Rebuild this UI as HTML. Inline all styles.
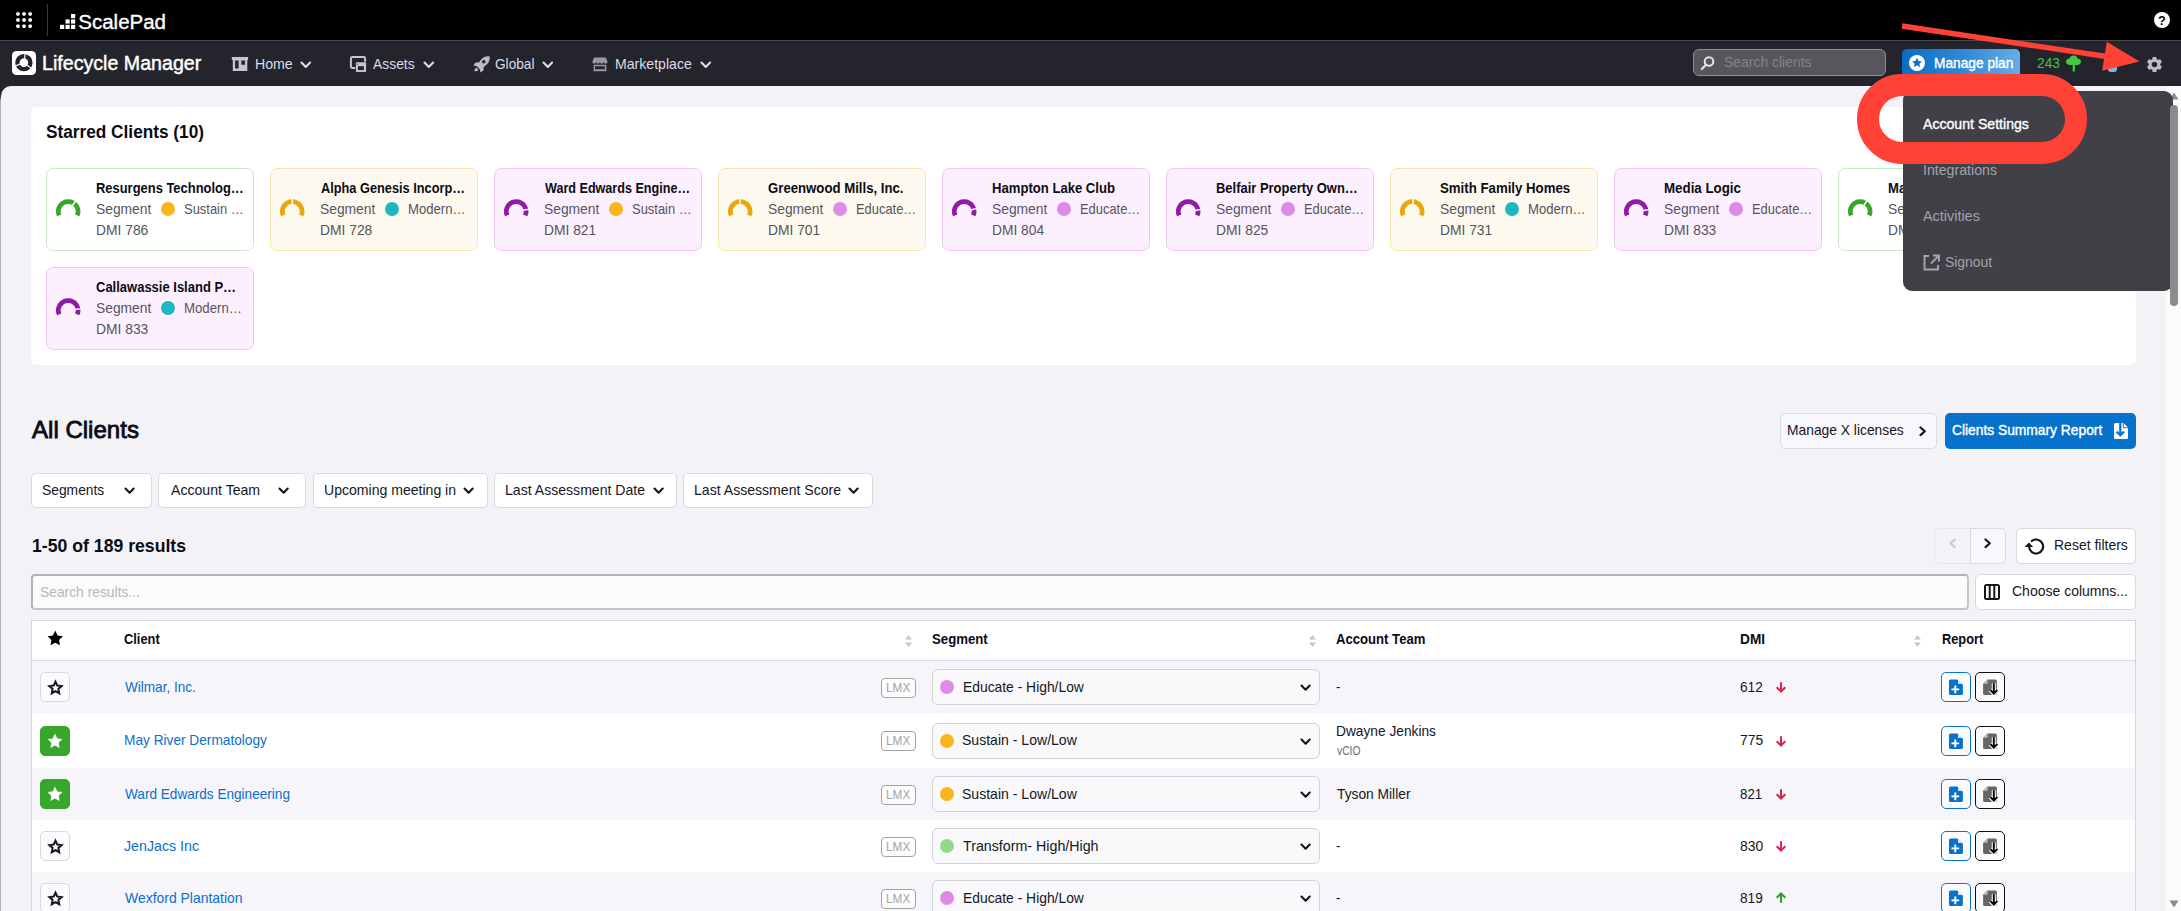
<!DOCTYPE html>
<html lang="en">
<head>
<meta charset="utf-8">
<title>Lifecycle Manager - Clients</title>
<style>
*{box-sizing:border-box;}
html,body{margin:0;padding:0;}
body{width:2181px;height:911px;overflow:hidden;position:relative;background:#24242c;font-family:"Liberation Sans",sans-serif;font-size:14.5px;color:#16161d;}
.abs{position:absolute;}
.g{position:absolute;left:0;top:0;}
.t{position:absolute;white-space:nowrap;line-height:1;transform-origin:0 0;}
.card{position:absolute;width:208px;height:83px;border:1px solid #c9e9c4;border-radius:7px;background:#fff;}
.card.y{background:#fef9ee;border-color:#fbe4b4;}
.card.p{background:#fdf0fe;border-color:#f1c6f6;}
.dot{position:absolute;width:14px;height:14px;border-radius:50%;}
.c-or{background:#f8b51c;}.c-te{background:#1fb5c2;}.c-pk{background:#dd8ae8;}.c-gr{background:#93d98c;}
.btn{position:absolute;background:#fff;border:1px solid #d7d7de;border-radius:5px;}
.row{position:absolute;left:32px;width:2103px;}
.alt{background:#f6f5fa;}
.starb{position:absolute;left:40px;width:30px;height:30px;border:1px solid #d9d9df;border-radius:5px;background:#fbfbfd;}
.starb.on{background:#38a52b;border-color:#38a52b;}
.lmx{position:absolute;left:881px;width:35px;height:20px;border:1px solid #a3a3a3;border-radius:4px;background:#fdfdfd;}
.sel{position:absolute;left:932px;width:388px;height:36px;border:1px solid #d2d2d9;border-radius:6px;background:#f9f9fb;}
.rb{position:absolute;width:30px;height:30px;border-radius:5px;background:#fbfbfd;}
.rb.b{left:1941px;border:1px solid #0672cb;}
.rb.k{left:1975px;border:1px solid #111;}
</style>
</head>
<body>
<header class="g" id="topbar">
<div class="abs" style="left:0px;top:0px;width:2181px;height:40px;background:#000"></div>
<div class="abs" style="left:0px;top:40px;width:2181px;height:1px;background:#47474d"></div>
<svg class="abs" style="left:16px;top:12px" width="16" height="16" viewBox="0 0 16 16" fill="#fff"><rect x="0.2" y="0.2" width="3.500" height="3.500" rx="1.100"/><rect x="6.3" y="0.2" width="3.500" height="3.500" rx="1.100"/><rect x="12.4" y="0.2" width="3.500" height="3.500" rx="1.100"/><rect x="0.2" y="6.3" width="3.500" height="3.500" rx="1.100"/><rect x="6.3" y="6.3" width="3.500" height="3.500" rx="1.100"/><rect x="12.4" y="6.3" width="3.500" height="3.500" rx="1.100"/><rect x="0.2" y="12.4" width="3.500" height="3.500" rx="1.100"/><rect x="6.3" y="12.4" width="3.500" height="3.500" rx="1.100"/><rect x="12.4" y="12.4" width="3.500" height="3.500" rx="1.100"/></svg>
<div class="abs" style="left:47px;top:4px;width:1px;height:32px;background:#38383e"></div>
<svg class="abs" style="left:60px;top:14px" width="16" height="16" viewBox="0 0 16 16" fill="#fff">
<rect x="0" y="10.8" width="4.2" height="4.2"/><rect x="5.5" y="5.4" width="4.2" height="4.2"/><rect x="5.5" y="10.8" width="4.2" height="4.2"/>
<rect x="11" y="0" width="4.2" height="4.2"/><rect x="11" y="5.4" width="4.2" height="4.2"/><rect x="11" y="10.8" width="4.2" height="4.2"/></svg>
<div class="t" style="left:78.27px;top:12.00px;font-size:20.5px;color:#fff;-webkit-text-stroke:0.35px #fff;">ScalePad</div>
<div class="abs" style="left:2154px;top:12px;width:16px;height:16px;border-radius:50%;background:#fff"></div>
<div class="t" style="left:2158.38px;top:14.00px;font-size:13px;color:#000;font-weight:bold;transform:scaleX(0.9772);">?</div>
</header>
<nav class="g" id="nav">
<div class="abs" style="left:0px;top:41px;width:2181px;height:45px;background:#24242c"></div>
<svg class="abs" style="left:12px;top:51px" width="24" height="24" viewBox="0 0 24 24"><rect x="0" y="0" width="24" height="24" rx="4.600" fill="#fff"/><circle cx="11.900" cy="11.600" r="6.500" fill="none" stroke="#24242c" stroke-width="4.400"/><path d="M13.300 1.500 L12.600 7.800" stroke="#fff" stroke-width="1.200" transform="rotate(0 11.9 11.6)"/><path d="M13.300 1.500 L12.600 7.800" stroke="#fff" stroke-width="1.200" transform="rotate(120 11.9 11.6)"/><path d="M13.300 1.500 L12.600 7.800" stroke="#fff" stroke-width="1.200" transform="rotate(240 11.9 11.6)"/></svg>
<div class="t" style="left:41.91px;top:53.00px;font-size:20px;color:#fff;-webkit-text-stroke:0.45px #fff;transform:scaleX(0.9812);">Lifecycle Manager</div>
<svg class="abs" style="left:231px;top:56px" width="18" height="16" viewBox="0 0 18 16"><path fill="#c6c5d5" fill-rule="evenodd" d="M0.800 1h16.300v2.900h-0.800V15H1.800V3.900H0.800z M4.100 4.600v8h3.500v-8z M10.300 4.600v4.100H14V4.600z"/></svg>
<div class="t" style="left:254.82px;top:57.00px;font-size:14.5px;color:#dcdce7;transform:scaleX(0.9749);">Home</div>
<svg class="abs" style="left:300.2px;top:60.89999999999999px" width="11.6" height="8.4" viewBox="-1.5 -1.5 11.6 8.4"><path d="M0 0 L4.3 4.4 L8.6 0" fill="none" stroke="#dcdce7" stroke-width="2.1" stroke-linecap="round" stroke-linejoin="round"/></svg>
<svg class="abs" style="left:349px;top:55px" width="18" height="18" viewBox="0 0 18 18"><rect x="1.900" y="2" width="14.200" height="11" rx="1.400" fill="none" stroke="#c6c5d5" stroke-width="2"/><rect x="6.300" y="6.700" width="11.500" height="11" fill="#24242c"/><rect x="6.900" y="7.300" width="10.200" height="9.700" rx="1" fill="#c6c5d5"/><rect x="8.900" y="11.200" width="6" height="3.900" fill="#24242c"/><circle cx="8.600" cy="9.100" r="0.700" fill="#24242c"/></svg>
<div class="t" style="left:373.08px;top:57.00px;font-size:14.5px;color:#dcdce7;transform:scaleX(0.9571);">Assets</div>
<svg class="abs" style="left:423.2px;top:61.0px" width="11.6" height="8.4" viewBox="-1.5 -1.5 11.6 8.4"><path d="M0 0 L4.3 4.4 L8.6 0" fill="none" stroke="#dcdce7" stroke-width="2.1" stroke-linecap="round" stroke-linejoin="round"/></svg>
<svg class="abs" style="left:472.500px;top:55.500px" width="17" height="17" viewBox="0 0 17 17"><path fill="#bcbbca" d="M16.600 0.400c-3.600-.5-7 1-9.300 4.200L6.200 6.200 2.600 6.600 0.400 9.600l3.400.6 3 3 .6 3.400 3-2.200.4-3.600 1.600-1.100c3.200-2.300 4.700-5.700 4.200-9.300z M10.800 7.600a1.800 1.800 0 1 1 0-3.600 1.800 1.800 0 0 1 0 3.600z M1.300 15.300l.8-2.800 1.400-.8 1.800 1.800-.8 1.400z" fill-rule="evenodd"/></svg>
<div class="t" style="left:494.82px;top:57.00px;font-size:14.5px;color:#dcdce7;transform:scaleX(0.9407);">Global</div>
<svg class="abs" style="left:542.3000000000001px;top:61.0px" width="11.6" height="8.4" viewBox="-1.5 -1.5 11.6 8.4"><path d="M0 0 L4.3 4.4 L8.6 0" fill="none" stroke="#dcdce7" stroke-width="2.1" stroke-linecap="round" stroke-linejoin="round"/></svg>
<svg class="abs" style="left:592px;top:57px" width="16" height="15" viewBox="0 0 16 15"><path fill="#9897a6" fill-rule="evenodd" d="M2.200 0.400h11.600L15.500 4.600c0 1.300-.8 2.200-1.900 2.200s-1.900-.9-1.900-2.200c0 1.300-.8 2.200-1.900 2.200S7.900 5.900 7.900 4.600c0 1.300-.8 2.200-1.900 2.200S4.100 5.900 4.100 4.600c0 1.300-.8 2.200-1.900 2.200S0.400 5.900 0.400 4.600z M1.600 7.800h12.800v6.400H1.600z M3 9.300v3h9.800v-3z"/></svg>
<div class="t" style="left:614.89px;top:57.00px;font-size:14.5px;color:#dcdce7;transform:scaleX(0.9719);">Marketplace</div>
<svg class="abs" style="left:700.2px;top:60.89999999999999px" width="11.6" height="8.4" viewBox="-1.5 -1.5 11.6 8.4"><path d="M0 0 L4.3 4.4 L8.6 0" fill="none" stroke="#dcdce7" stroke-width="2.1" stroke-linecap="round" stroke-linejoin="round"/></svg>
<div class="abs" style="left:1693px;top:49px;width:193px;height:27px;border:1px solid #8e8e93;border-radius:6px;background:#56565c"></div>
<svg class="abs" style="left:1700px;top:55px" width="16" height="16" viewBox="0 0 16 16"><circle cx="9" cy="6.500" r="4.300" fill="none" stroke="#e4e4ea" stroke-width="2"/><path d="M6 9.800 L1.800 14" stroke="#e4e4ea" stroke-width="2.200" stroke-linecap="round"/></svg>
<div class="t" style="left:1724.33px;top:55.00px;font-size:14.5px;color:#84848b;transform:scaleX(0.9606);">Search clients</div>
<div class="abs" style="left:1902px;top:49px;width:118px;height:33px;border-radius:5px;background:linear-gradient(90deg,#0a6cc4 0%,#2f88d4 50%,#66ade6 100%)"></div>
<svg class="abs" style="left:1909px;top:54.500px" width="16" height="16" viewBox="0 0 17 17"><circle cx="8.500" cy="8.500" r="8.500" fill="#fff"/><path fill="#0b6fc7" d="M8.500 3l1.600 3.400 3.700.4-2.800 2.500.8 3.600-3.300-1.900-3.300 1.900.8-3.600L3.200 6.800l3.700-.4z"/></svg>
<div class="t" style="left:1933.62px;top:56.00px;font-size:14.5px;color:#fff;-webkit-text-stroke:0.4px #fff;transform:scaleX(0.9465);">Manage plan</div>
<div class="t" style="left:2036.62px;top:56.00px;font-size:14.5px;color:#41c83c;transform:scaleX(0.9492);">243</div>
<svg class="abs" style="left:2065px;top:54.500px" width="17" height="17" viewBox="0 0 17 18"><path fill="#41c83c" d="M8.800 0.500c2.400 0 3.800 1.500 3.900 3.200 2.200.2 3.800 1.600 3.800 3.500 0 2-1.800 3.400-4.200 3.400H10v6.900H7.600v-6.900H4.700C2.300 10.600.5 9.200.5 7.200c0-1.900 1.600-3.300 3.800-3.500C4.600 2 6.400.5 8.800.5z"/></svg>
<div class="abs" style="left:2108px;top:64px;width:9px;height:8px;border-radius:3px;background:#7fb4e4"></div>
<svg class="abs" style="left:2145.300px;top:54.500px" width="19" height="19" viewBox="0 0 24 24"><path fill="#bdbccb" d="M19.140 12.940c.04-.3.060-.61.060-.94 0-.32-.02-.64-.07-.94l2.030-1.580a.49.49 0 0 0 .12-.61l-1.920-3.320a.488.488 0 0 0-.59-.22l-2.390.96c-.5-.38-1.030-.7-1.620-.94l-.36-2.540a.484.484 0 0 0-.48-.41h-3.840c-.24 0-.43.170-.47.410l-.36 2.540c-.59.240-1.130.570-1.620.940l-2.390-.960c-.22-.080-.47 0-.59.220L2.740 8.870c-.12.210-.08.470.12.610l2.030 1.580c-.05.300-.09.630-.09.940s.02.640.07.940l-2.030 1.580a.49.49 0 0 0-.12.610l1.920 3.320c.12.220.37.290.59.220l2.390-.96c.5.380 1.030.7 1.620.94l.36 2.540c.05.240.24.410.48.410h3.840c.24 0 .44-.17.470-.41l.36-2.540c.59-.24 1.130-.56 1.620-.94l2.390.96c.22.080.47 0 .59-.22l1.920-3.320c.12-.22.070-.47-.12-.61l-2.010-1.580zM12 15.600c-1.980 0-3.600-1.620-3.600-3.600s1.620-3.600 3.600-3.600 3.600 1.620 3.600 3.600-1.620 3.600-3.600 3.600z"/></svg>
</nav>
<main class="g" id="content">
<div class="abs" style="left:1px;top:86px;width:2165px;height:825px;background:#f3f2f7;border-top-left-radius:10px"></div>
<div class="abs" style="left:0px;top:96px;width:1px;height:815px;background:linear-gradient(180deg,#24242c 0,#b2b2b5 5px,#b2b2b5 100%)"></div>
<section class="g" id="starred">
<div class="abs" style="left:31px;top:107px;width:2105px;height:258px;background:#fff;border-radius:5px"></div>
<div class="t" style="left:46.15px;top:123.00px;font-size:18px;color:#0c0c14;font-weight:bold;transform:scaleX(0.9573);">Starred Clients (10)</div>
<div class="card g" style="left:46px;top:168px">
<svg class="abs" style="left:8.800px;top:30.300px" width="25" height="19" viewBox="0 0 25 19"><path d="M3.20 16.41 A9.85 9.85 0 1 1 21.20 16.41" fill="none" stroke="#38a52b" stroke-width="4.7"/><path d="M16.02 7.14 L20.14 1.48" stroke="#fff" stroke-width="1.500"/></svg>
<div class="dot c-or" style="left:114px;top:33px"></div>
</div>
<div class="t" style="left:96.16px;top:181.00px;font-size:14.5px;color:#0c0c14;font-weight:bold;transform:scaleX(0.8919);">Resurgens Technolog…</div>
<div class="t" style="left:95.52px;top:202.00px;font-size:14.5px;color:#55555f;transform:scaleX(0.9534);">Segment</div>
<div class="t" style="left:183.80px;top:202.00px;font-size:14.5px;color:#55555f;transform:scaleX(0.8928);">Sustain …</div>
<div class="t" style="left:95.95px;top:223.00px;font-size:14.5px;color:#55555f;transform:scaleX(0.9545);">DMI 786</div>
<div class="card y" style="left:270px;top:168px">
<svg class="abs" style="left:8.800px;top:30.300px" width="25" height="19" viewBox="0 0 25 19"><path d="M3.20 16.41 A9.85 9.85 0 1 1 21.20 16.41" fill="none" stroke="#e8a80c" stroke-width="4.7"/><path d="M12.31 5.90 L12.44 -1.10" stroke="#fef9ee" stroke-width="1.500"/></svg>
<div class="dot c-te" style="left:114px;top:33px"></div>
</div>
<div class="t" style="left:320.88px;top:181.00px;font-size:14.5px;color:#0c0c14;font-weight:bold;transform:scaleX(0.8802);">Alpha Genesis Incorp…</div>
<div class="t" style="left:319.52px;top:202.00px;font-size:14.5px;color:#55555f;transform:scaleX(0.9534);">Segment</div>
<div class="t" style="left:407.99px;top:202.00px;font-size:14.5px;color:#55555f;transform:scaleX(0.9054);">Modern…</div>
<div class="t" style="left:319.74px;top:223.00px;font-size:14.5px;color:#55555f;transform:scaleX(0.9544);">DMI 728</div>
<div class="card p" style="left:494px;top:168px">
<svg class="abs" style="left:8.800px;top:30.300px" width="25" height="19" viewBox="0 0 25 19"><path d="M3.20 16.41 A9.85 9.85 0 1 1 21.20 16.41" fill="none" stroke="#8e1ba8" stroke-width="4.7"/><path d="M18.60 11.27 L25.49 10.06" stroke="#fdf0fe" stroke-width="1.500"/></svg>
<div class="dot c-or" style="left:114px;top:33px"></div>
</div>
<div class="t" style="left:544.84px;top:181.00px;font-size:14.5px;color:#0c0c14;font-weight:bold;transform:scaleX(0.8680);">Ward Edwards Engine…</div>
<div class="t" style="left:543.52px;top:202.00px;font-size:14.5px;color:#55555f;transform:scaleX(0.9534);">Segment</div>
<div class="t" style="left:631.80px;top:202.00px;font-size:14.5px;color:#55555f;transform:scaleX(0.8928);">Sustain …</div>
<div class="t" style="left:543.74px;top:223.00px;font-size:14.5px;color:#55555f;transform:scaleX(0.9535);">DMI 821</div>
<div class="card y" style="left:718px;top:168px">
<svg class="abs" style="left:8.800px;top:30.300px" width="25" height="19" viewBox="0 0 25 19"><path d="M3.20 16.41 A9.85 9.85 0 1 1 21.20 16.41" fill="none" stroke="#e8a80c" stroke-width="4.7"/><path d="M11.97 5.90 L11.73 -1.09" stroke="#fef9ee" stroke-width="1.500"/></svg>
<div class="dot c-pk" style="left:114px;top:33px"></div>
</div>
<div class="t" style="left:768.20px;top:181.00px;font-size:14.5px;color:#0c0c14;font-weight:bold;transform:scaleX(0.9092);">Greenwood Mills, Inc.</div>
<div class="t" style="left:767.52px;top:202.00px;font-size:14.5px;color:#55555f;transform:scaleX(0.9534);">Segment</div>
<div class="t" style="left:855.81px;top:202.00px;font-size:14.5px;color:#55555f;transform:scaleX(0.8892);">Educate…</div>
<div class="t" style="left:767.74px;top:223.00px;font-size:14.5px;color:#55555f;transform:scaleX(0.9535);">DMI 701</div>
<div class="card p" style="left:942px;top:168px">
<svg class="abs" style="left:8.800px;top:30.300px" width="25" height="19" viewBox="0 0 25 19"><path d="M3.20 16.41 A9.85 9.85 0 1 1 21.20 16.41" fill="none" stroke="#8e1ba8" stroke-width="4.7"/><path d="M18.53 10.94 L25.35 9.36" stroke="#fdf0fe" stroke-width="1.500"/></svg>
<div class="dot c-pk" style="left:114px;top:33px"></div>
</div>
<div class="t" style="left:992.18px;top:181.00px;font-size:14.5px;color:#0c0c14;font-weight:bold;transform:scaleX(0.9031);">Hampton Lake Club</div>
<div class="t" style="left:991.52px;top:202.00px;font-size:14.5px;color:#55555f;transform:scaleX(0.9534);">Segment</div>
<div class="t" style="left:1079.81px;top:202.00px;font-size:14.5px;color:#55555f;transform:scaleX(0.8892);">Educate…</div>
<div class="t" style="left:991.53px;top:223.00px;font-size:14.5px;color:#55555f;transform:scaleX(0.9499);">DMI 804</div>
<div class="card p" style="left:1166px;top:168px">
<svg class="abs" style="left:8.800px;top:30.300px" width="25" height="19" viewBox="0 0 25 19"><path d="M3.20 16.41 A9.85 9.85 0 1 1 21.20 16.41" fill="none" stroke="#8e1ba8" stroke-width="4.7"/><path d="M18.64 11.50 L25.57 10.52" stroke="#fdf0fe" stroke-width="1.500"/></svg>
<div class="dot c-pk" style="left:114px;top:33px"></div>
</div>
<div class="t" style="left:1216.16px;top:181.00px;font-size:14.5px;color:#0c0c14;font-weight:bold;transform:scaleX(0.8934);">Belfair Property Own…</div>
<div class="t" style="left:1215.52px;top:202.00px;font-size:14.5px;color:#55555f;transform:scaleX(0.9534);">Segment</div>
<div class="t" style="left:1303.81px;top:202.00px;font-size:14.5px;color:#55555f;transform:scaleX(0.8892);">Educate…</div>
<div class="t" style="left:1215.95px;top:223.00px;font-size:14.5px;color:#55555f;transform:scaleX(0.9540);">DMI 825</div>
<div class="card y" style="left:1390px;top:168px">
<svg class="abs" style="left:8.800px;top:30.300px" width="25" height="19" viewBox="0 0 25 19"><path d="M3.20 16.41 A9.85 9.85 0 1 1 21.20 16.41" fill="none" stroke="#e8a80c" stroke-width="4.7"/><path d="M12.77 5.92 L13.38 -1.05" stroke="#fef9ee" stroke-width="1.500"/></svg>
<div class="dot c-te" style="left:114px;top:33px"></div>
</div>
<div class="t" style="left:1440.16px;top:181.00px;font-size:14.5px;color:#0c0c14;font-weight:bold;transform:scaleX(0.9127);">Smith Family Homes</div>
<div class="t" style="left:1439.52px;top:202.00px;font-size:14.5px;color:#55555f;transform:scaleX(0.9534);">Segment</div>
<div class="t" style="left:1527.99px;top:202.00px;font-size:14.5px;color:#55555f;transform:scaleX(0.9054);">Modern…</div>
<div class="t" style="left:1439.74px;top:223.00px;font-size:14.5px;color:#55555f;transform:scaleX(0.9535);">DMI 731</div>
<div class="card p" style="left:1614px;top:168px">
<svg class="abs" style="left:8.800px;top:30.300px" width="25" height="19" viewBox="0 0 25 19"><path d="M3.20 16.41 A9.85 9.85 0 1 1 21.20 16.41" fill="none" stroke="#8e1ba8" stroke-width="4.7"/><path d="M18.65 11.61 L25.60 10.75" stroke="#fdf0fe" stroke-width="1.500"/></svg>
<div class="dot c-pk" style="left:114px;top:33px"></div>
</div>
<div class="t" style="left:1664.10px;top:181.00px;font-size:14.5px;color:#0c0c14;font-weight:bold;transform:scaleX(0.9187);">Media Logic</div>
<div class="t" style="left:1663.52px;top:202.00px;font-size:14.5px;color:#55555f;transform:scaleX(0.9534);">Segment</div>
<div class="t" style="left:1751.81px;top:202.00px;font-size:14.5px;color:#55555f;transform:scaleX(0.8892);">Educate…</div>
<div class="t" style="left:1663.95px;top:223.00px;font-size:14.5px;color:#55555f;transform:scaleX(0.9540);">DMI 833</div>
<div class="card g" style="left:1838px;top:168px">
<svg class="abs" style="left:8.800px;top:30.300px" width="25" height="19" viewBox="0 0 25 19"><path d="M3.20 16.41 A9.85 9.85 0 1 1 21.20 16.41" fill="none" stroke="#38a52b" stroke-width="4.7"/><path d="M15.64 6.89 L19.35 0.95" stroke="#fff" stroke-width="1.500"/></svg>
<div class="dot c-or" style="left:114px;top:33px"></div>
</div>
<div class="t" style="left:1888.16px;top:181.00px;font-size:14.5px;color:#0c0c14;font-weight:bold;transform:scaleX(0.9031);">Marsh Harbor Dental</div>
<div class="t" style="left:1887.52px;top:202.00px;font-size:14.5px;color:#55555f;transform:scaleX(0.9534);">Segment</div>
<div class="t" style="left:1975.80px;top:202.00px;font-size:14.5px;color:#55555f;transform:scaleX(0.8928);">Sustain …</div>
<div class="t" style="left:1887.95px;top:223.00px;font-size:14.5px;color:#55555f;transform:scaleX(0.9545);">DMI 790</div>
<div class="card p" style="left:46px;top:267px">
<svg class="abs" style="left:8.800px;top:30.300px" width="25" height="19" viewBox="0 0 25 19"><path d="M3.20 16.41 A9.85 9.85 0 1 1 21.20 16.41" fill="none" stroke="#8e1ba8" stroke-width="4.7"/><path d="M18.65 11.61 L25.60 10.75" stroke="#fdf0fe" stroke-width="1.500"/></svg>
<div class="dot c-te" style="left:114px;top:33px"></div>
</div>
<div class="t" style="left:96.19px;top:280.00px;font-size:14.5px;color:#0c0c14;font-weight:bold;transform:scaleX(0.8960);">Callawassie Island P…</div>
<div class="t" style="left:95.52px;top:301.00px;font-size:14.5px;color:#55555f;transform:scaleX(0.9534);">Segment</div>
<div class="t" style="left:183.58px;top:301.00px;font-size:14.5px;color:#55555f;transform:scaleX(0.9099);">Modern…</div>
<div class="t" style="left:95.95px;top:322.00px;font-size:14.5px;color:#55555f;transform:scaleX(0.9540);">DMI 833</div>
</section>
<section class="g" id="clients">
<div class="t" style="left:31.96px;top:418.00px;font-size:24.5px;color:#0c0c14;-webkit-text-stroke:0.85px #0c0c14;transform:scaleX(0.9817);">All Clients</div>
<div class="abs" style="left:1780px;top:413px;width:157px;height:36px;background:#f8f7fb;border:1px solid #dcdce3;border-radius:5px"></div>
<div class="t" style="left:1786.89px;top:423.00px;font-size:14.5px;color:#16161d;transform:scaleX(0.9530);">Manage X licenses</div>
<svg class="abs" style="left:1918.6499999999999px;top:425.7px" width="7.3" height="10.6" viewBox="-1.5 -1.5 7.3 10.6"><path d="M0 0 L4.3 3.8 L0 7.6" fill="none" stroke="#16161d" stroke-width="2.2" stroke-linecap="round" stroke-linejoin="round"/></svg>
<div class="abs" style="left:1945px;top:413px;width:191px;height:36px;background:#0672cb;border-radius:5px"></div>
<div class="t" style="left:1951.81px;top:423.00px;font-size:14.5px;color:#fff;-webkit-text-stroke:0.4px #fff;transform:scaleX(0.9514);">Clients Summary Report</div>
<svg class="abs" style="left:2114px;top:423px" width="14" height="16" viewBox="0 0 14 16"><path fill="#fff" d="M1.500 0h8L14 4.400V14.500A1.500 1.500 0 0 1 12.500 16h-11A1.500 1.500 0 0 1 0 14.500v-13A1.500 1.500 0 0 1 1.500 0z"/><path d="M9.300 0v4.700h4.700" fill="none" stroke="#0672cb" stroke-width="0.900"/><path d="M6.300 0v12 M2.600 8.600L6.300 12.300 10 8.600" fill="none" stroke="#0672cb" stroke-width="2.200"/></svg>
<div class="btn" style="left:31px;top:473px;width:121px;height:35px;"></div>
<div class="t" style="left:42.38px;top:483.00px;font-size:14.5px;color:#16161d;transform:scaleX(0.9541);">Segments</div>
<svg class="abs" style="left:124.4px;top:486.7px" width="11.2" height="8.2" viewBox="-1.5 -1.5 11.2 8.2"><path d="M0 0 L4.1 4.2 L8.2 0" fill="none" stroke="#16161d" stroke-width="2.1" stroke-linecap="round" stroke-linejoin="round"/></svg>
<div class="btn" style="left:158px;top:473px;width:148px;height:35px;"></div>
<div class="t" style="left:170.52px;top:483.00px;font-size:14.5px;color:#16161d;transform:scaleX(0.9727);">Account Team</div>
<svg class="abs" style="left:278.2px;top:486.7px" width="11.2" height="8.2" viewBox="-1.5 -1.5 11.2 8.2"><path d="M0 0 L4.1 4.2 L8.2 0" fill="none" stroke="#16161d" stroke-width="2.1" stroke-linecap="round" stroke-linejoin="round"/></svg>
<div class="btn" style="left:313px;top:473px;width:175px;height:35px;"></div>
<div class="t" style="left:323.53px;top:483.00px;font-size:14.5px;color:#16161d;transform:scaleX(0.9696);">Upcoming meeting in</div>
<svg class="abs" style="left:463.4px;top:486.7px" width="11.2" height="8.2" viewBox="-1.5 -1.5 11.2 8.2"><path d="M0 0 L4.1 4.2 L8.2 0" fill="none" stroke="#16161d" stroke-width="2.1" stroke-linecap="round" stroke-linejoin="round"/></svg>
<div class="btn" style="left:494px;top:473px;width:183px;height:35px;"></div>
<div class="t" style="left:505.37px;top:483.00px;font-size:14.5px;color:#16161d;transform:scaleX(0.9710);">Last Assessment Date</div>
<svg class="abs" style="left:652.6px;top:486.7px" width="11.2" height="8.2" viewBox="-1.5 -1.5 11.2 8.2"><path d="M0 0 L4.1 4.2 L8.2 0" fill="none" stroke="#16161d" stroke-width="2.1" stroke-linecap="round" stroke-linejoin="round"/></svg>
<div class="btn" style="left:683px;top:473px;width:190px;height:35px;"></div>
<div class="t" style="left:694.37px;top:483.00px;font-size:14.5px;color:#16161d;transform:scaleX(0.9707);">Last Assessment Score</div>
<svg class="abs" style="left:847.9px;top:486.7px" width="11.2" height="8.2" viewBox="-1.5 -1.5 11.2 8.2"><path d="M0 0 L4.1 4.2 L8.2 0" fill="none" stroke="#16161d" stroke-width="2.1" stroke-linecap="round" stroke-linejoin="round"/></svg>
<div class="t" style="left:31.53px;top:537.00px;font-size:18.5px;color:#0c0c14;font-weight:bold;transform:scaleX(0.9543);">1-50 of 189 results</div>
<div class="abs" style="left:1934px;top:528px;width:37px;height:36px;border:1px solid #e7e6ec;border-radius:5px 0 0 5px;background:#f3f2f7"></div>
<div class="abs" style="left:1970px;top:528px;width:36px;height:36px;border:1px solid #dadae0;border-radius:0 5px 5px 0;background:#f8f7fb"></div>
<svg class="abs" style="left:1948.6499999999999px;top:538.0px" width="7.3" height="10.6" viewBox="-1.5 -1.5 7.3 10.6"><path d="M4.3 0 L0 3.8 L4.3 7.6" fill="none" stroke="#c9c9cf" stroke-width="2.2" stroke-linecap="round" stroke-linejoin="round"/></svg>
<svg class="abs" style="left:1984.35px;top:538.0px" width="7.3" height="10.6" viewBox="-1.5 -1.5 7.3 10.6"><path d="M0 0 L4.3 3.8 L0 7.6" fill="none" stroke="#16161d" stroke-width="2.2" stroke-linecap="round" stroke-linejoin="round"/></svg>
<div class="btn" style="left:2016px;top:528px;width:120px;height:36px;"></div>
<svg class="abs" style="left:2024px;top:537px" width="21" height="19" viewBox="0 0 21 19"><path d="M7.900 3.900 A7 7 0 1 1 5.100 9.800" fill="none" stroke="#16161d" stroke-width="2.200" stroke-linecap="round"/><path d="M0.600 9.900 L9.200 9.900 L4.900 5.500z" fill="#16161d"/></svg>
<div class="t" style="left:2054.38px;top:538.00px;font-size:14.5px;color:#16161d;transform:scaleX(0.9648);">Reset filters</div>
<div class="abs" style="left:31px;top:574px;width:1938px;height:36px;border:2px solid #c4c4c4;border-top-color:#b4b4b4;border-left-color:#b4b4b4;border-radius:4px;background:#fbfbfb"></div>
<div class="t" style="left:40.46px;top:585.00px;font-size:14.5px;color:#b7b7b7;transform:scaleX(0.9537);">Search results...</div>
<div class="btn" style="left:1975px;top:574px;width:161px;height:36px;"></div>
<svg class="abs" style="left:1984px;top:584px" width="16" height="16" viewBox="0 0 16 16"><rect x="1" y="1" width="14" height="14" rx="1.500" fill="none" stroke="#16161d" stroke-width="2"/><path d="M5.700 1v14 M10.300 1v14" stroke="#16161d" stroke-width="2"/></svg>
<div class="t" style="left:2012.23px;top:584.00px;font-size:14.5px;color:#16161d;transform:scaleX(0.9656);">Choose columns...</div>
<div class="abs" style="left:31px;top:620px;width:2105px;height:291px;background:#fff;border:1px solid #d5d5dc;border-bottom:none"></div>
<div class="abs" style="left:32px;top:660px;width:2103px;height:1px;background:#d9d9df"></div>
<svg class="abs" style="left:46.800px;top:630.300px" width="16.500" height="16.500" viewBox="0 0 16 16"><path d="M8 0.600l2.300 4.800 5.200.7-3.800 3.600.9 5.200L8 12.400l-4.600 2.500.9-5.200L0.500 6.100l5.200-.7z" fill="#000"/></svg>
<div class="t" style="left:124.19px;top:632.00px;font-size:14.5px;color:#0c0c14;font-weight:bold;transform:scaleX(0.8872);">Client</div>
<svg class="abs" style="left:904.5px;top:635px" width="7" height="12" viewBox="0 0 7 12"><path d="M3.500 0L7 4.500H0z M3.500 12L7 7.500H0z" fill="#c6c6cc"/></svg>
<div class="t" style="left:931.65px;top:632.00px;font-size:14.5px;color:#0c0c14;font-weight:bold;transform:scaleX(0.9098);">Segment</div>
<svg class="abs" style="left:1308.5px;top:635px" width="7" height="12" viewBox="0 0 7 12"><path d="M3.500 0L7 4.500H0z M3.500 12L7 7.500H0z" fill="#c6c6cc"/></svg>
<div class="t" style="left:1336.16px;top:632.00px;font-size:14.5px;color:#0c0c14;font-weight:bold;transform:scaleX(0.9046);">Account Team</div>
<div class="t" style="left:1740.10px;top:632.00px;font-size:14.5px;color:#0c0c14;font-weight:bold;transform:scaleX(0.9437);">DMI</div>
<svg class="abs" style="left:1913.5px;top:635px" width="7" height="12" viewBox="0 0 7 12"><path d="M3.500 0L7 4.500H0z M3.500 12L7 7.500H0z" fill="#c6c6cc"/></svg>
<div class="t" style="left:1941.65px;top:632.00px;font-size:14.5px;color:#0c0c14;font-weight:bold;transform:scaleX(0.8820);">Report</div>
<div class="g" id="row1">
<div class="abs" style="left:32px;top:661px;width:2103px;height:52px;background:#f6f5fa"></div>
<div class="starb" style="top:672.0px"><svg class="abs" style="left:5.500px;top:5.500px" width="17" height="17" viewBox="0 0 16 16"><path d="M8 2.500l1.700 3.700 4 .5-3 2.700.8 4L8 11.400l-3.500 2 .8-4-3-2.700 4-.5z" fill="none" stroke="#16161d" stroke-width="1.900" stroke-linejoin="miter"/></svg></div>
<div class="t" style="left:125.11px;top:680.00px;font-size:14.5px;color:#0c6fcb;transform:scaleX(0.9352);">Wilmar, Inc.</div>
<div class="lmx" style="top:678.0px"></div>
<div class="t" style="left:886.46px;top:681.00px;font-size:13px;color:#a4a4a4;transform:scaleX(0.9083);">LMX</div>
<div class="sel" style="top:669.0px"><div class="dot c-pk" style="left:7px;top:10px"></div></div>
<div class="t" style="left:962.85px;top:680.00px;font-size:14.5px;color:#16161d;transform:scaleX(0.9551);">Educate - High/Low</div>
<svg class="abs" style="left:1299.9px;top:684.1999999999999px" width="11.2" height="8.2" viewBox="-1.5 -1.5 11.2 8.2"><path d="M0 0 L4.1 4.2 L8.2 0" fill="none" stroke="#16161d" stroke-width="2.1" stroke-linecap="round" stroke-linejoin="round"/></svg>
<div class="t" style="left:1336.00px;top:680.00px;font-size:14.5px;color:#16161d;transform:scaleX(0.9000);">-</div>
<div class="t" style="left:1739.83px;top:680.00px;font-size:14.5px;color:#16161d;transform:scaleX(0.9429);">612</div>
<svg class="abs" style="left:1775px;top:681.0px" width="12" height="12" viewBox="0 0 12 12"><path d="M6 1.200v9.300 M1.700 6.200L6 10.500 10.300 6.200" fill="none" stroke="#d6264b" stroke-width="2"/></svg>
<div class="rb b" style="top:672.0px"><svg class="abs" style="left:-1px;top:-1px" width="30" height="30" viewBox="0 0 30 30"><path fill="#0672cb" d="M9.500 7.400h6.800l5.600 5.300v8.800a1.500 1.500 0 0 1-1.500 1.500h-10.900a1.500 1.500 0 0 1-1.500-1.500v-12.600a1.500 1.500 0 0 1 1.500-1.500z"/><path d="M17 7.400v4.600h4.900z" fill="#cfe3f5"/><path d="M14.300 13.500v7.800 M10.400 17.400h7.800" stroke="#fff" stroke-width="1.900"/></svg></div>
<div class="rb k" style="top:672.0px"><svg class="abs" style="left:-1px;top:-1px" width="30" height="30" viewBox="0 0 30 30"><path fill="#666" d="M12.600 7.400h7.800a1.500 1.500 0 0 1 1.500 1.500v12.600a1.500 1.500 0 0 1-1.500 1.500h-10.800a1.500 1.500 0 0 1-1.500-1.500v-9.800z"/><path d="M8.100 11.700h4.500v-4.300z" fill="#bdbdbd"/><path d="M18.800 11.300v10.500 M15.200 17.800l3.600 3.900 3.600-3.900" fill="none" stroke="#fafafc" stroke-width="4"/><path d="M18.800 11.300v10.300 M15.200 17.800l3.600 3.900 3.600-3.900" fill="none" stroke="#000" stroke-width="1.900"/></svg></div>
</div>
<div class="g" id="row2">
<div class="starb on" style="top:726px"><svg class="abs" style="left:6px;top:6px" width="16" height="16" viewBox="0 0 16 16"><path d="M8 0.600l2.300 4.800 5.200.7-3.800 3.600.9 5.200L8 12.400l-4.600 2.500.9-5.200L0.500 6.100l5.200-.7z" fill="#fff"/></svg></div>
<div class="t" style="left:124.47px;top:733.00px;font-size:14.5px;color:#0c6fcb;transform:scaleX(0.9435);">May River Dermatology</div>
<div class="lmx" style="top:731px"></div>
<div class="t" style="left:886.46px;top:734.00px;font-size:13px;color:#a4a4a4;transform:scaleX(0.9083);">LMX</div>
<div class="sel" style="top:723px"><div class="dot c-or" style="left:7px;top:10px"></div></div>
<div class="t" style="left:962.48px;top:733.00px;font-size:14.5px;color:#16161d;transform:scaleX(0.9692);">Sustain - Low/Low</div>
<svg class="abs" style="left:1299.9px;top:738.1999999999999px" width="11.2" height="8.2" viewBox="-1.5 -1.5 11.2 8.2"><path d="M0 0 L4.1 4.2 L8.2 0" fill="none" stroke="#16161d" stroke-width="2.1" stroke-linecap="round" stroke-linejoin="round"/></svg>
<div class="t" style="left:1335.79px;top:724.00px;font-size:14.5px;color:#16161d;transform:scaleX(0.9467);">Dwayne Jenkins</div>
<div class="t" style="left:1336.87px;top:745.00px;font-size:12px;color:#6a6a72;transform:scaleX(0.8600);">vCIO</div>
<div class="t" style="left:1739.50px;top:733.00px;font-size:14.5px;color:#16161d;transform:scaleX(0.9586);">775</div>
<svg class="abs" style="left:1775px;top:735px" width="12" height="12" viewBox="0 0 12 12"><path d="M6 1.200v9.300 M1.700 6.200L6 10.500 10.300 6.200" fill="none" stroke="#d6264b" stroke-width="2"/></svg>
<div class="rb b" style="top:726px"><svg class="abs" style="left:-1px;top:-1px" width="30" height="30" viewBox="0 0 30 30"><path fill="#0672cb" d="M9.500 7.400h6.800l5.600 5.300v8.800a1.500 1.500 0 0 1-1.500 1.500h-10.900a1.500 1.500 0 0 1-1.500-1.500v-12.600a1.500 1.500 0 0 1 1.500-1.500z"/><path d="M17 7.400v4.600h4.900z" fill="#cfe3f5"/><path d="M14.300 13.500v7.800 M10.400 17.400h7.800" stroke="#fff" stroke-width="1.900"/></svg></div>
<div class="rb k" style="top:726px"><svg class="abs" style="left:-1px;top:-1px" width="30" height="30" viewBox="0 0 30 30"><path fill="#666" d="M12.600 7.400h7.800a1.500 1.500 0 0 1 1.500 1.500v12.600a1.500 1.500 0 0 1-1.500 1.500h-10.800a1.500 1.500 0 0 1-1.500-1.500v-9.800z"/><path d="M8.100 11.700h4.500v-4.300z" fill="#bdbdbd"/><path d="M18.800 11.300v10.500 M15.200 17.800l3.600 3.900 3.600-3.900" fill="none" stroke="#fafafc" stroke-width="4"/><path d="M18.800 11.300v10.300 M15.200 17.800l3.600 3.900 3.600-3.900" fill="none" stroke="#000" stroke-width="1.900"/></svg></div>
</div>
<div class="g" id="row3">
<div class="abs" style="left:32px;top:768px;width:2103px;height:52px;background:#f6f5fa"></div>
<div class="starb on" style="top:779.0px"><svg class="abs" style="left:6px;top:6px" width="16" height="16" viewBox="0 0 16 16"><path d="M8 0.600l2.300 4.800 5.200.7-3.800 3.600.9 5.200L8 12.400l-4.600 2.500.9-5.200L0.500 6.100l5.200-.7z" fill="#fff"/></svg></div>
<div class="t" style="left:125.12px;top:787.00px;font-size:14.5px;color:#0c6fcb;transform:scaleX(0.9375);">Ward Edwards Engineering</div>
<div class="lmx" style="top:785.0px"></div>
<div class="t" style="left:886.46px;top:788.00px;font-size:13px;color:#a4a4a4;transform:scaleX(0.9083);">LMX</div>
<div class="sel" style="top:776.0px"><div class="dot c-or" style="left:7px;top:10px"></div></div>
<div class="t" style="left:962.48px;top:787.00px;font-size:14.5px;color:#16161d;transform:scaleX(0.9692);">Sustain - Low/Low</div>
<svg class="abs" style="left:1299.9px;top:791.1999999999999px" width="11.2" height="8.2" viewBox="-1.5 -1.5 11.2 8.2"><path d="M0 0 L4.1 4.2 L8.2 0" fill="none" stroke="#16161d" stroke-width="2.1" stroke-linecap="round" stroke-linejoin="round"/></svg>
<div class="t" style="left:1336.80px;top:787.00px;font-size:14.5px;color:#16161d;transform:scaleX(0.9499);">Tyson Miller</div>
<div class="t" style="left:1739.80px;top:787.00px;font-size:14.5px;color:#16161d;transform:scaleX(0.9160);">821</div>
<svg class="abs" style="left:1775px;top:788.0px" width="12" height="12" viewBox="0 0 12 12"><path d="M6 1.200v9.300 M1.700 6.200L6 10.500 10.300 6.200" fill="none" stroke="#d6264b" stroke-width="2"/></svg>
<div class="rb b" style="top:779.0px"><svg class="abs" style="left:-1px;top:-1px" width="30" height="30" viewBox="0 0 30 30"><path fill="#0672cb" d="M9.500 7.400h6.800l5.600 5.300v8.800a1.500 1.500 0 0 1-1.500 1.500h-10.900a1.500 1.500 0 0 1-1.500-1.500v-12.600a1.500 1.500 0 0 1 1.500-1.500z"/><path d="M17 7.400v4.600h4.900z" fill="#cfe3f5"/><path d="M14.300 13.500v7.800 M10.400 17.400h7.800" stroke="#fff" stroke-width="1.900"/></svg></div>
<div class="rb k" style="top:779.0px"><svg class="abs" style="left:-1px;top:-1px" width="30" height="30" viewBox="0 0 30 30"><path fill="#666" d="M12.600 7.400h7.800a1.500 1.500 0 0 1 1.500 1.500v12.600a1.500 1.500 0 0 1-1.500 1.500h-10.800a1.500 1.500 0 0 1-1.500-1.500v-9.800z"/><path d="M8.100 11.700h4.500v-4.300z" fill="#bdbdbd"/><path d="M18.800 11.300v10.500 M15.200 17.800l3.600 3.900 3.600-3.900" fill="none" stroke="#fafafc" stroke-width="4"/><path d="M18.800 11.300v10.300 M15.200 17.800l3.600 3.900 3.600-3.900" fill="none" stroke="#000" stroke-width="1.900"/></svg></div>
</div>
<div class="g" id="row4">
<div class="starb" style="top:831.0px"><svg class="abs" style="left:5.500px;top:5.500px" width="17" height="17" viewBox="0 0 16 16"><path d="M8 2.500l1.700 3.700 4 .5-3 2.700.8 4L8 11.400l-3.500 2 .8-4-3-2.700 4-.5z" fill="none" stroke="#16161d" stroke-width="1.900" stroke-linejoin="miter"/></svg></div>
<div class="t" style="left:124.49px;top:839.00px;font-size:14.5px;color:#0c6fcb;transform:scaleX(0.9802);">JenJacs Inc</div>
<div class="lmx" style="top:837.0px"></div>
<div class="t" style="left:886.46px;top:840.00px;font-size:13px;color:#a4a4a4;transform:scaleX(0.9083);">LMX</div>
<div class="sel" style="top:828.0px"><div class="dot c-gr" style="left:7px;top:10px"></div></div>
<div class="t" style="left:963.17px;top:839.00px;font-size:14.5px;color:#16161d;transform:scaleX(0.9817);">Transform- High/High</div>
<svg class="abs" style="left:1299.9px;top:843.1999999999999px" width="11.2" height="8.2" viewBox="-1.5 -1.5 11.2 8.2"><path d="M0 0 L4.1 4.2 L8.2 0" fill="none" stroke="#16161d" stroke-width="2.1" stroke-linecap="round" stroke-linejoin="round"/></svg>
<div class="t" style="left:1336.00px;top:839.00px;font-size:14.5px;color:#16161d;transform:scaleX(0.9000);">-</div>
<div class="t" style="left:1739.82px;top:839.00px;font-size:14.5px;color:#16161d;transform:scaleX(0.9572);">830</div>
<svg class="abs" style="left:1775px;top:840.0px" width="12" height="12" viewBox="0 0 12 12"><path d="M6 1.200v9.300 M1.700 6.200L6 10.500 10.300 6.200" fill="none" stroke="#d6264b" stroke-width="2"/></svg>
<div class="rb b" style="top:831.0px"><svg class="abs" style="left:-1px;top:-1px" width="30" height="30" viewBox="0 0 30 30"><path fill="#0672cb" d="M9.500 7.400h6.800l5.600 5.300v8.800a1.500 1.500 0 0 1-1.500 1.500h-10.900a1.500 1.500 0 0 1-1.500-1.500v-12.600a1.500 1.500 0 0 1 1.500-1.500z"/><path d="M17 7.400v4.600h4.900z" fill="#cfe3f5"/><path d="M14.300 13.500v7.800 M10.400 17.400h7.800" stroke="#fff" stroke-width="1.900"/></svg></div>
<div class="rb k" style="top:831.0px"><svg class="abs" style="left:-1px;top:-1px" width="30" height="30" viewBox="0 0 30 30"><path fill="#666" d="M12.600 7.400h7.800a1.500 1.500 0 0 1 1.500 1.500v12.600a1.500 1.500 0 0 1-1.500 1.500h-10.800a1.500 1.500 0 0 1-1.500-1.500v-9.800z"/><path d="M8.100 11.700h4.500v-4.300z" fill="#bdbdbd"/><path d="M18.800 11.300v10.500 M15.200 17.800l3.600 3.900 3.600-3.900" fill="none" stroke="#fafafc" stroke-width="4"/><path d="M18.800 11.300v10.300 M15.200 17.800l3.600 3.900 3.600-3.900" fill="none" stroke="#000" stroke-width="1.900"/></svg></div>
</div>
<div class="g" id="row5">
<div class="abs" style="left:32px;top:872px;width:2103px;height:39px;background:#f6f5fa"></div>
<div class="starb" style="top:883.0px"><svg class="abs" style="left:5.500px;top:5.500px" width="17" height="17" viewBox="0 0 16 16"><path d="M8 2.500l1.700 3.700 4 .5-3 2.700.8 4L8 11.400l-3.500 2 .8-4-3-2.700 4-.5z" fill="none" stroke="#16161d" stroke-width="1.900" stroke-linejoin="miter"/></svg></div>
<div class="t" style="left:125.11px;top:891.00px;font-size:14.5px;color:#0c6fcb;transform:scaleX(0.9617);">Wexford Plantation</div>
<div class="lmx" style="top:889.0px"></div>
<div class="t" style="left:886.46px;top:892.00px;font-size:13px;color:#a4a4a4;transform:scaleX(0.9083);">LMX</div>
<div class="sel" style="top:880.0px"><div class="dot c-pk" style="left:7px;top:10px"></div></div>
<div class="t" style="left:962.85px;top:891.00px;font-size:14.5px;color:#16161d;transform:scaleX(0.9551);">Educate - High/Low</div>
<svg class="abs" style="left:1299.9px;top:895.1999999999999px" width="11.2" height="8.2" viewBox="-1.5 -1.5 11.2 8.2"><path d="M0 0 L4.1 4.2 L8.2 0" fill="none" stroke="#16161d" stroke-width="2.1" stroke-linecap="round" stroke-linejoin="round"/></svg>
<div class="t" style="left:1336.00px;top:891.00px;font-size:14.5px;color:#16161d;transform:scaleX(0.9000);">-</div>
<div class="t" style="left:1739.80px;top:891.00px;font-size:14.5px;color:#16161d;transform:scaleX(0.9442);">819</div>
<svg class="abs" style="left:1775px;top:892.0px" width="12" height="12" viewBox="0 0 12 12"><path d="M6 10.800V1.500 M1.700 5.800L6 1.500 10.300 5.800" fill="none" stroke="#2f9e22" stroke-width="2"/></svg>
<div class="rb b" style="top:883.0px"><svg class="abs" style="left:-1px;top:-1px" width="30" height="30" viewBox="0 0 30 30"><path fill="#0672cb" d="M9.500 7.400h6.800l5.600 5.300v8.800a1.500 1.500 0 0 1-1.500 1.500h-10.900a1.500 1.500 0 0 1-1.500-1.500v-12.600a1.500 1.500 0 0 1 1.500-1.500z"/><path d="M17 7.400v4.600h4.900z" fill="#cfe3f5"/><path d="M14.300 13.500v7.800 M10.400 17.400h7.800" stroke="#fff" stroke-width="1.900"/></svg></div>
<div class="rb k" style="top:883.0px"><svg class="abs" style="left:-1px;top:-1px" width="30" height="30" viewBox="0 0 30 30"><path fill="#666" d="M12.600 7.400h7.800a1.500 1.500 0 0 1 1.500 1.500v12.600a1.500 1.500 0 0 1-1.500 1.500h-10.800a1.500 1.500 0 0 1-1.500-1.500v-9.800z"/><path d="M8.100 11.700h4.500v-4.300z" fill="#bdbdbd"/><path d="M18.800 11.300v10.500 M15.200 17.800l3.600 3.900 3.600-3.900" fill="none" stroke="#fafafc" stroke-width="4"/><path d="M18.800 11.300v10.300 M15.200 17.800l3.600 3.900 3.600-3.900" fill="none" stroke="#000" stroke-width="1.900"/></svg></div>
</div>
<div class="abs" style="left:2135px;top:620px;width:1px;height:291px;background:#d5d5dc"></div>
</section>
</main>
<div class="g" id="scrollbar">
<div class="abs" style="left:2166px;top:86px;width:15px;height:825px;background:#fbfbfb"></div>
<svg class="abs" style="left:2169px;top:92px" width="10" height="8" viewBox="0 0 10 8"><path d="M5 0.500L9.500 7.500H0.500z" fill="#8b8b8b"/></svg>
<svg class="abs" style="left:2169px;top:900px" width="10" height="8" viewBox="0 0 10 8"><path d="M5 7.500L9.500 0.500H0.500z" fill="#8b8b8b"/></svg>
</div>
<div class="g" id="menu">
<div class="abs" style="left:1903px;top:91px;width:270px;height:200px;background:#404046;border-radius:9px"></div>
<div class="t" style="left:1923.30px;top:117.00px;font-size:14.5px;color:#fff;-webkit-text-stroke:0.35px #fff;transform:scaleX(0.9731);">Account Settings</div>
<div class="t" style="left:1923.25px;top:163.00px;font-size:14.5px;color:#a3a3ae;transform:scaleX(0.9763);">Integrations</div>
<div class="t" style="left:1922.97px;top:209.00px;font-size:14.5px;color:#a3a3ae;transform:scaleX(0.9936);">Activities</div>
<svg class="abs" style="left:1922.500px;top:254px" width="17" height="17" viewBox="0 0 17 17"><path d="M6 2H1.500v13.500H15V11" fill="none" stroke="#a6a6b0" stroke-width="1.900"/><path d="M8 9.500L15.500 2 M10 1.500h6v6" fill="none" stroke="#a6a6b0" stroke-width="1.900"/></svg>
<div class="t" style="left:1944.82px;top:255.00px;font-size:14.5px;color:#a3a3ae;transform:scaleX(0.9565);">Signout</div>
</div>
<div class="abs" style="left:2170px;top:105px;width:8px;height:201px;background:#8b8b8b;border-radius:4px"></div>
<svg class="abs" id="annot" style="left:0;top:0" width="2181" height="911" viewBox="0 0 2181 911">
<rect x="1868" y="85" width="208" height="68" rx="34" ry="34" fill="none" stroke="#ff4136" stroke-width="22"/>
<path d="M1902 26 L2110 57" stroke="#ff4136" stroke-width="5.400" fill="none"/>
<path d="M2106.800 41.800 L2139.500 61.400 L2102.100 70.700 z" fill="#ff4136"/>
</svg>
</body>
</html>
